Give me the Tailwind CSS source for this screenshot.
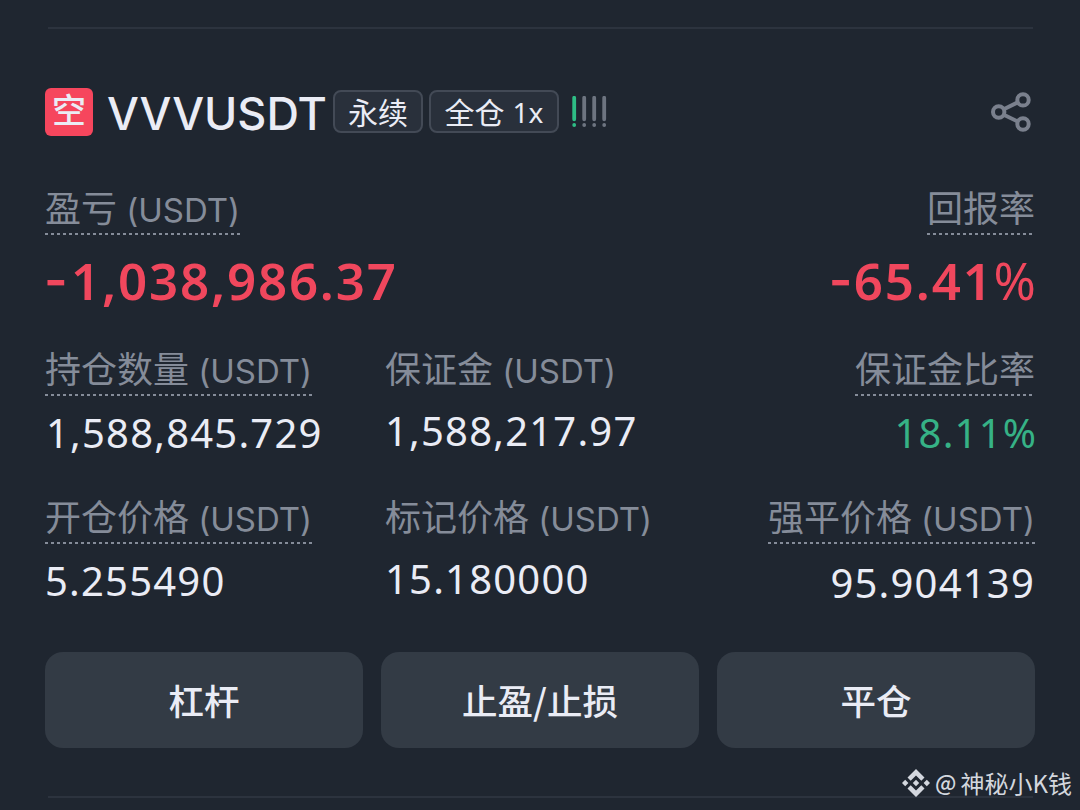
<!DOCTYPE html>
<html lang="zh-CN">
  <head>
    <meta charset="UTF-8" />
    <meta name="viewport" content="width=device-width, initial-scale=1.0" />
    <title>VVVUSDT 永续</title>
    <script src="https://cdn.jsdelivr.net/npm/@tailwindcss/browser@4"></script>
  </head>
  <body
    class="relative w-[1080px] h-[810px] overflow-hidden bg-[#1f2630] px-[45px] font-['Inter','Noto_Sans_CJK_SC',sans-serif] text-[#eaecf5] whitespace-nowrap"
  >
    <div class="h-[29px] flex items-end">
      <div class="w-full h-0.5 ml-[3px] mr-[2px] bg-[#2c333e]"></div>
    </div>

    <!-- Symbol -->
    <header class="mt-[59px] h-12 flex items-center">
      <div
        class="size-12 rounded-md bg-[#f6465d] text-center text-[34px] leading-[42px] font-medium font-['Noto_Sans_CJK_SC',sans-serif]"
      >
        空
      </div>
      <h1 class="ml-3.5 pt-1 w-[226px] text-[45px] leading-[48px] font-medium">VVVUSDT</h1>
      <div
        class="mb-0.5 w-[90px] h-[43px] rounded-lg border-2 border-[#434a56] bg-[#29303b] flex items-center justify-center text-[30px] leading-[39px] font-['Noto_Sans_CJK_SC',sans-serif]"
      >
        永续
      </div>
      <div
        class="mb-0.5 ml-1.5 w-[130px] h-[43px] rounded-lg border-2 border-[#434a56] bg-[#29303b] flex items-center justify-center gap-2 text-[30px] leading-[39px] font-['Noto_Sans_CJK_SC',sans-serif]"
      >
        全仓 <span class="pt-0.5 text-[28px] font-['Noto_Sans',sans-serif]">1x</span>
      </div>
      <svg class="ml-[11px] w-10 h-8" viewBox="0 0 40 32" fill="none" stroke-width="3.8" stroke-linecap="round">
        <path stroke="#2ebd85" d="M4.200 1.800v21.500M4.200 29v.1" />
        <path stroke="#6d7480" d="M14.200 1.800v21.500M14.200 29v.1M24.200 1.800v21.500M24.200 29v.1M34.200 1.800v21.500M34.200 29v.1" />
      </svg>
      <svg class="ml-auto mr-1 w-10 h-[42px]" viewBox="0 0 40 42" fill="none" stroke="#7a808d" stroke-width="4">
        <circle cx="7.700" cy="21" r="5.700" />
        <circle cx="32" cy="8.900" r="5.700" />
        <circle cx="32" cy="33" r="5.700" />
        <path d="M12.800 18.200 26.800 11.300M12.800 23.800 26.800 30.500" />
      </svg>
    </header>

    <!-- Profit and loss -->
    <section class="mt-[49px] flex justify-between">
      <div>
        <div class="w-fit">
          <div class="h-12 text-[36px] leading-[49px] text-[#858c99]">
            盈亏 <span class="-ml-px text-[33px]">(USDT)</span>
          </div>
          <div class="h-0.5 bg-[repeating-linear-gradient(90deg,#858c99_0_3px,transparent_3px_6px)]"></div>
        </div>
        <div
          class="mt-[15px] h-[64px] flex text-[51px] leading-[60px] font-semibold tracking-[1.8px] text-[#f0475d] font-['Noto_Sans',sans-serif]"
        >
          <span class="-ml-px w-[27px] font-['Inter',sans-serif]">-</span>1,038,986.37
        </div>
      </div>
      <div class="flex flex-col items-end">
        <div class="w-fit">
          <div class="h-12 text-[36px] leading-[49px] text-[#858c99]">回报率</div>
          <div class="h-0.5 bg-[repeating-linear-gradient(90deg,#858c99_0_3px,transparent_3px_6px)]"></div>
        </div>
        <div
          class="mt-[15px] h-[64px] flex text-[51px] leading-[60px] font-semibold tracking-[1.8px] text-[#f0475d] font-['Noto_Sans',sans-serif]"
        >
          <span class="w-[25px] font-['Inter',sans-serif]">-</span>65.41<span class="font-normal tracking-[-1px]">%</span>
        </div>
      </div>
    </section>

    <!-- Size and margin -->
    <section class="mt-8 h-[148px] grid grid-cols-[340px_300px_1fr]">
      <div>
        <div class="w-fit">
          <div class="h-12 text-[36px] leading-[49px] text-[#858c99]">
            持仓数量 <span class="-ml-px text-[33px]">(USDT)</span>
          </div>
          <div class="h-0.5 bg-[repeating-linear-gradient(90deg,#858c99_0_3px,transparent_3px_6px)]"></div>
        </div>
        <div class="mt-3 ml-px h-[52px] text-[40px] leading-[50px] tracking-[1.2px] font-['Noto_Sans',sans-serif]">
          1,588,845.729
        </div>
      </div>
      <div>
        <div class="h-12 text-[36px] leading-[49px] text-[#858c99]">
          保证金 <span class="-ml-px text-[33px]">(USDT)</span>
        </div>
        <div class="mt-3 h-[52px] text-[40px] leading-[50px] tracking-[1.2px] font-['Noto_Sans',sans-serif]">
          1,588,217.97
        </div>
      </div>
      <div class="flex flex-col items-end">
        <div class="w-fit">
          <div class="h-12 text-[36px] leading-[49px] text-[#858c99]">保证金比率</div>
          <div class="h-0.5 bg-[repeating-linear-gradient(90deg,#858c99_0_3px,transparent_3px_6px)]"></div>
        </div>
        <div
          class="mt-3 h-[52px] text-[40px] leading-[50px] tracking-[1.2px] text-[#36b286] font-['Noto_Sans',sans-serif]"
        >
          18.11<span class="tracking-[-1px]">%</span>
        </div>
      </div>
    </section>

    <!-- Prices -->
    <section class="h-[158px] grid grid-cols-[340px_300px_1fr]">
      <div>
        <div class="w-fit">
          <div class="h-12 text-[36px] leading-[49px] text-[#858c99]">
            开仓价格 <span class="-ml-px text-[33px]">(USDT)</span>
          </div>
          <div class="h-0.5 bg-[repeating-linear-gradient(90deg,#858c99_0_3px,transparent_3px_6px)]"></div>
        </div>
        <div class="mt-3 h-[52px] text-[40px] leading-[50px] tracking-[1.2px] font-['Noto_Sans',sans-serif]">
          5.255490
        </div>
      </div>
      <div>
        <div class="h-12 text-[36px] leading-[49px] text-[#858c99]">
          标记价格 <span class="-ml-px text-[33px]">(USDT)</span>
        </div>
        <div class="mt-3 h-[52px] text-[40px] leading-[50px] tracking-[1.2px] font-['Noto_Sans',sans-serif]">
          15.180000
        </div>
      </div>
      <div class="flex flex-col items-end">
        <div class="w-fit">
          <div class="h-12 text-[36px] leading-[49px] text-[#858c99]">
            强平价格 <span class="-ml-px text-[33px]">(USDT)</span>
          </div>
          <div class="h-0.5 bg-[repeating-linear-gradient(90deg,#858c99_0_3px,transparent_3px_6px)]"></div>
        </div>
        <div class="mt-3.5 h-[52px] text-[40px] leading-[50px] tracking-[1.2px] font-['Noto_Sans',sans-serif]">
          95.904139
        </div>
      </div>
    </section>

    <!-- Actions -->
    <div class="grid grid-cols-3 gap-[18px] font-['Noto_Sans_CJK_SC',sans-serif]">
      <button class="h-24 rounded-[18px] bg-[#333b45] text-[35.5px] font-medium">杠杆</button>
      <button class="h-24 rounded-[18px] bg-[#333b45] text-[35.5px] font-medium">止盈/止损</button>
      <button class="h-24 rounded-[18px] bg-[#333b45] text-[35.5px] font-medium">平仓</button>
    </div>

    <div class="mt-12 ml-[3px] mr-[2px] h-0.5 bg-[#2c333e]"></div>

    <!-- Watermark -->
    <div
      class="absolute right-2 bottom-[9px] h-9 flex items-center text-[#d3d7de] text-[24px] leading-9 font-['Noto_Sans_CJK_SC',sans-serif]"
    >
      <svg class="size-7 mr-[5px]" viewBox="0 0 28 28" fill="currentColor">
        <path d="M14 0 22.500 8.500 19.300 11.700 14 6.400 8.700 11.700 5.500 8.500Z" />
        <path d="M14 28 22.500 19.500 19.300 16.300 14 21.600 8.700 16.300 5.500 19.500Z" />
        <path d="M14 10.800 17.200 14 14 17.200 10.800 14ZM3.200 10.800 6.400 14 3.200 17.200 0 14ZM24.800 10.800 28 14 24.800 17.200 21.600 14Z" />
      </svg>
      <span class="mr-1 mb-1 text-[22px] leading-8 font-medium">@</span>
      <span>神秘小K钱</span>
    </div>
  </body>
</html>
